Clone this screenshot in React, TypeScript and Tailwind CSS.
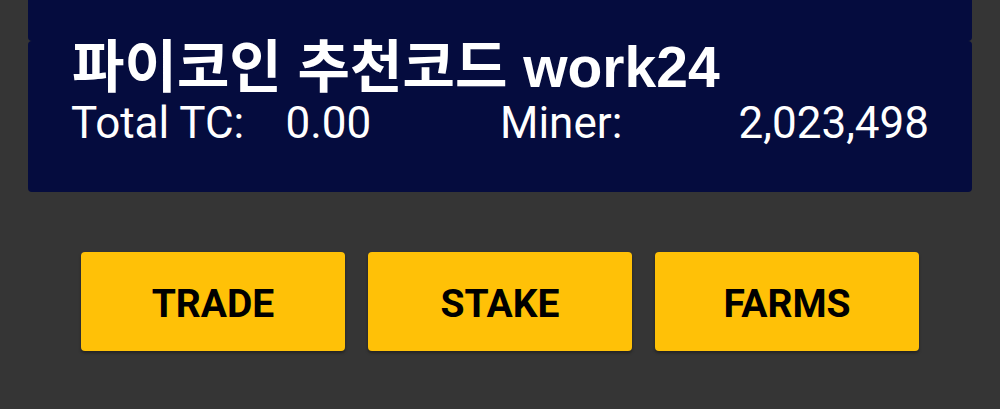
export default function App() {
  const stats = [
    { text: "Total TC:", align: "text-left" },
    { text: "0.00", align: "text-left" },
    { text: "Miner:", align: "text-left" },
    { text: "2,023,498", align: "text-right" },
  ];

  return (
    <div
      className="h-[409px] w-full overflow-hidden bg-[#353535] px-[28px]"
      style={{ fontFamily: "Roboto, 'Noto Sans CJK KR', sans-serif" }}
    >
      <div className="h-[41px] rounded-b-[4px] bg-[#050c3e]" />

      <div className="flex h-[151px] flex-col rounded-[4px] bg-[#050c3e] px-[43px]">
        <h1
          className="pl-[1px] text-[57px] font-bold leading-[52px] text-white"
          style={{ fontFamily: "'Liberation Sans', 'Noto Sans CJK KR', sans-serif" }}
        >
          파이코인 추천코드 work24
        </h1>
        <div className="mt-[6px] grid grid-cols-4 text-[44px] leading-[48px] text-white">
          {stats.map((s) => (
            <span key={s.text} className={s.align}>
              {s.text}
            </span>
          ))}
        </div>
      </div>

      <div className="mt-[60px] flex justify-center gap-[23px]">
        {["TRADE", "STAKE", "FARMS"].map((label) => (
          <button
            key={label}
            className="flex h-[99px] w-[264px] items-center justify-center rounded-[4px] bg-[#ffc107] pt-[5px] text-[39px] font-bold text-black shadow-[0_2px_3px_rgba(0,0,0,0.35)]"
          >
            {label}
          </button>
        ))}
      </div>
    </div>
  );
}
